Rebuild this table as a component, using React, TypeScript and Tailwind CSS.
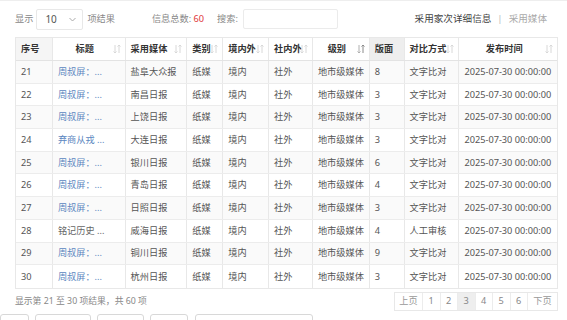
const rows = [
  { no: 21, title: "周叔屏：...", link: true, media: "盐阜大众报", page: "8", mode: "文字比对" },
  { no: 22, title: "周叔屏：...", link: true, media: "南昌日报", page: "3", mode: "文字比对" },
  { no: 23, title: "周叔屏：...", link: true, media: "上饶日报", page: "3", mode: "文字比对" },
  { no: 24, title: "弃商从戎 ...", link: true, media: "大连日报", page: "3", mode: "文字比对" },
  { no: 25, title: "周叔屏：...", link: true, media: "银川日报", page: "6", mode: "文字比对" },
  { no: 26, title: "周叔屏：...", link: true, media: "青岛日报", page: "4", mode: "文字比对" },
  { no: 27, title: "周叔屏：...", link: true, media: "日照日报", page: "3", mode: "文字比对" },
  { no: 28, title: "铭记历史 ...", link: false, media: "威海日报", page: "4", mode: "人工审核" },
  { no: 29, title: "周叔屏：...", link: true, media: "铜川日报", page: "9", mode: "文字比对" },
  { no: 30, title: "周叔屏：...", link: true, media: "杭州日报", page: "3", mode: "文字比对" },
];

function SortIcon({ dark = false }: { dark?: boolean }) {
  const c = dark ? "#8a8a8a" : "#d8d8d8";
  return (
    <svg width="8" height="10" viewBox="0 0 8 10" className="shrink-0">
      <path d="M2 1v8M0.5 7.5L2 9l1.5-1.5" stroke={dark ? "#b0b0b0" : c} strokeWidth="1" fill="none" />
      <path d="M6 9V1M4.5 2.5L6 1l1.5 1.5" stroke={c} strokeWidth="1" fill="none" />
    </svg>
  );
}

const cols = [
  { label: "序号", w: "w-[37px]", sort: false, center: false, bg: "bg-[#f5f5f5]" },
  { label: "标题", w: "w-[73px]", sort: true, center: true, bg: "" },
  { label: "采用媒体", w: "w-[62px]", sort: true, center: false, bg: "" },
  { label: "类别", w: "w-[36px]", sort: true, center: false, bg: "" },
  { label: "境内外", w: "w-[46px]", sort: true, center: false, bg: "" },
  { label: "社内外", w: "w-[44px]", sort: true, center: false, bg: "" },
  { label: "级别", w: "w-[57px]", sort: true, center: true, bg: "", dark: true },
  { label: "版面", w: "w-[35px]", sort: false, center: false, bg: "bg-[#eeeeee]" },
  { label: "对比方式", w: "w-[55px]", sort: true, center: false, bg: "" },
  { label: "发布时间", w: "w-[98px]", sort: true, center: true, bg: "" },
];

export default function App() {
  const cell = "px-[5px] border-r border-[#e8e8e8] last:border-r-0 flex items-center whitespace-nowrap overflow-hidden";
  return (
    <div className="h-[320px] w-[567px] overflow-hidden bg-white text-[9.2px] text-[#555] border-t border-[#eeeeee]" style={{ fontFamily: '"Noto Sans", "Noto Sans CJK SC", sans-serif' }}>
      <div className="pl-[15px] pr-[20px] h-[36px] flex items-center">
        <span className="text-[#888]">显示</span>
        <div className="ml-[3px] w-[47px] h-[21px] border border-[#e8e8e8] rounded-[2px] flex items-center pl-[8px] pr-[6px] justify-between text-[10px] text-[#555]">
          <span>10</span>
          <svg width="7" height="5" viewBox="0 0 7 5"><path d="M0.5 1L3.5 4L6.5 1" stroke="#aaa" fill="none" strokeWidth="1" /></svg>
        </div>
        <span className="ml-[4px] text-[#888]">项结果</span>
        <span className="ml-[37px] text-[#888]">信息总数: <span className="text-[#e0393a]">60</span></span>
        <span className="ml-[13px] text-[#888]">搜索:</span>
        <div className="ml-[5px] w-[95px] h-[20px] border border-[#ebebeb] rounded-[2px]" />
        <div className="ml-auto flex items-center text-[9.6px]">
          <span className="text-[#444]">采用家次详细信息</span>
          <span className="mx-[6px] text-[#bbb]">|</span>
          <span className="text-[#aaa]">采用媒体</span>
        </div>
      </div>

      <div className="ml-[15px] w-[543px] border border-[#e8e8e8]">
        <div className="flex h-[23px] border-b border-[#e3e3e3] font-semibold text-[#333]">
          {cols.map((c) => (
            <div key={c.label} className={`${c.w} ${c.bg} ${cell} ${c.center ? "justify-center" : ""} relative`}>
              <span className={c.center ? "pr-[8px]" : ""}>{c.label}</span>
              {c.sort && (
                <span className="absolute right-[4px] top-[6px]">
                  <SortIcon dark={c.dark} />
                </span>
              )}
            </div>
          ))}
        </div>
        {rows.map((r, i) => (
          <div key={r.no} className={`flex h-[22.7px] border-b border-[#ececec] last:border-b-0 ${i % 2 === 0 ? "bg-[#fafafa]" : "bg-white"}`}>
            <div className={`w-[37px] ${cell}`}>{r.no}</div>
            <div className={`w-[73px] ${cell} ${r.link ? "text-[#5a86c0]" : "text-[#666]"}`}>{r.title}</div>
            <div className={`w-[62px] ${cell}`}>{r.media}</div>
            <div className={`w-[36px] ${cell}`}>纸媒</div>
            <div className={`w-[46px] ${cell}`}>境内</div>
            <div className={`w-[44px] ${cell}`}>社外</div>
            <div className={`w-[57px] ${cell}`}>地市级媒体</div>
            <div className={`w-[35px] ${cell}`}>{r.page}</div>
            <div className={`w-[55px] ${cell}`}>{r.mode}</div>
            <div className={`w-[98px] ${cell}`}>2025-07-30 00:00:00</div>
          </div>
        ))}
      </div>

      <div className="pl-[15px] pr-[9px] mt-[3px] flex items-center h-[19px]">
        <span className="text-[#888] text-[8.8px]">显示第 21 至 30 项结果，共 60 项</span>
        <div className="ml-auto flex h-[19px] border border-[#e8e8e8] text-[9.2px] text-[#888]">
          <span className="w-[28px] flex items-center justify-center border-r border-[#ececec] text-[#999]">上页</span>
          {["1", "2", "3", "4", "5", "6"].map((p) => (
            <span key={p} className={`w-[17.5px] flex items-center justify-center border-r border-[#ececec] ${p === "3" ? "bg-[#eeeeee]" : ""}`}>{p}</span>
          ))}
          <span className="w-[29px] flex items-center justify-center text-[#999]">下页</span>
        </div>
      </div>

      <div className="mt-[3px] flex">
        <div className="w-[29px] h-[30px] border border-[#d8d8d8] rounded-[3px]" />
        <div className="ml-[6px] w-[56px] h-[30px] border border-[#d8d8d8] rounded-[3px]" />
        <div className="ml-[6px] w-[47px] h-[30px] border border-[#d8d8d8] rounded-[3px]" />
        <div className="ml-[6px] w-[38px] h-[30px] border border-[#d8d8d8] rounded-[3px]" />
        <div className="ml-[7px] w-[118px] h-[30px] border border-[#d8d8d8] rounded-[3px]" />
      </div>
    </div>
  );
}
